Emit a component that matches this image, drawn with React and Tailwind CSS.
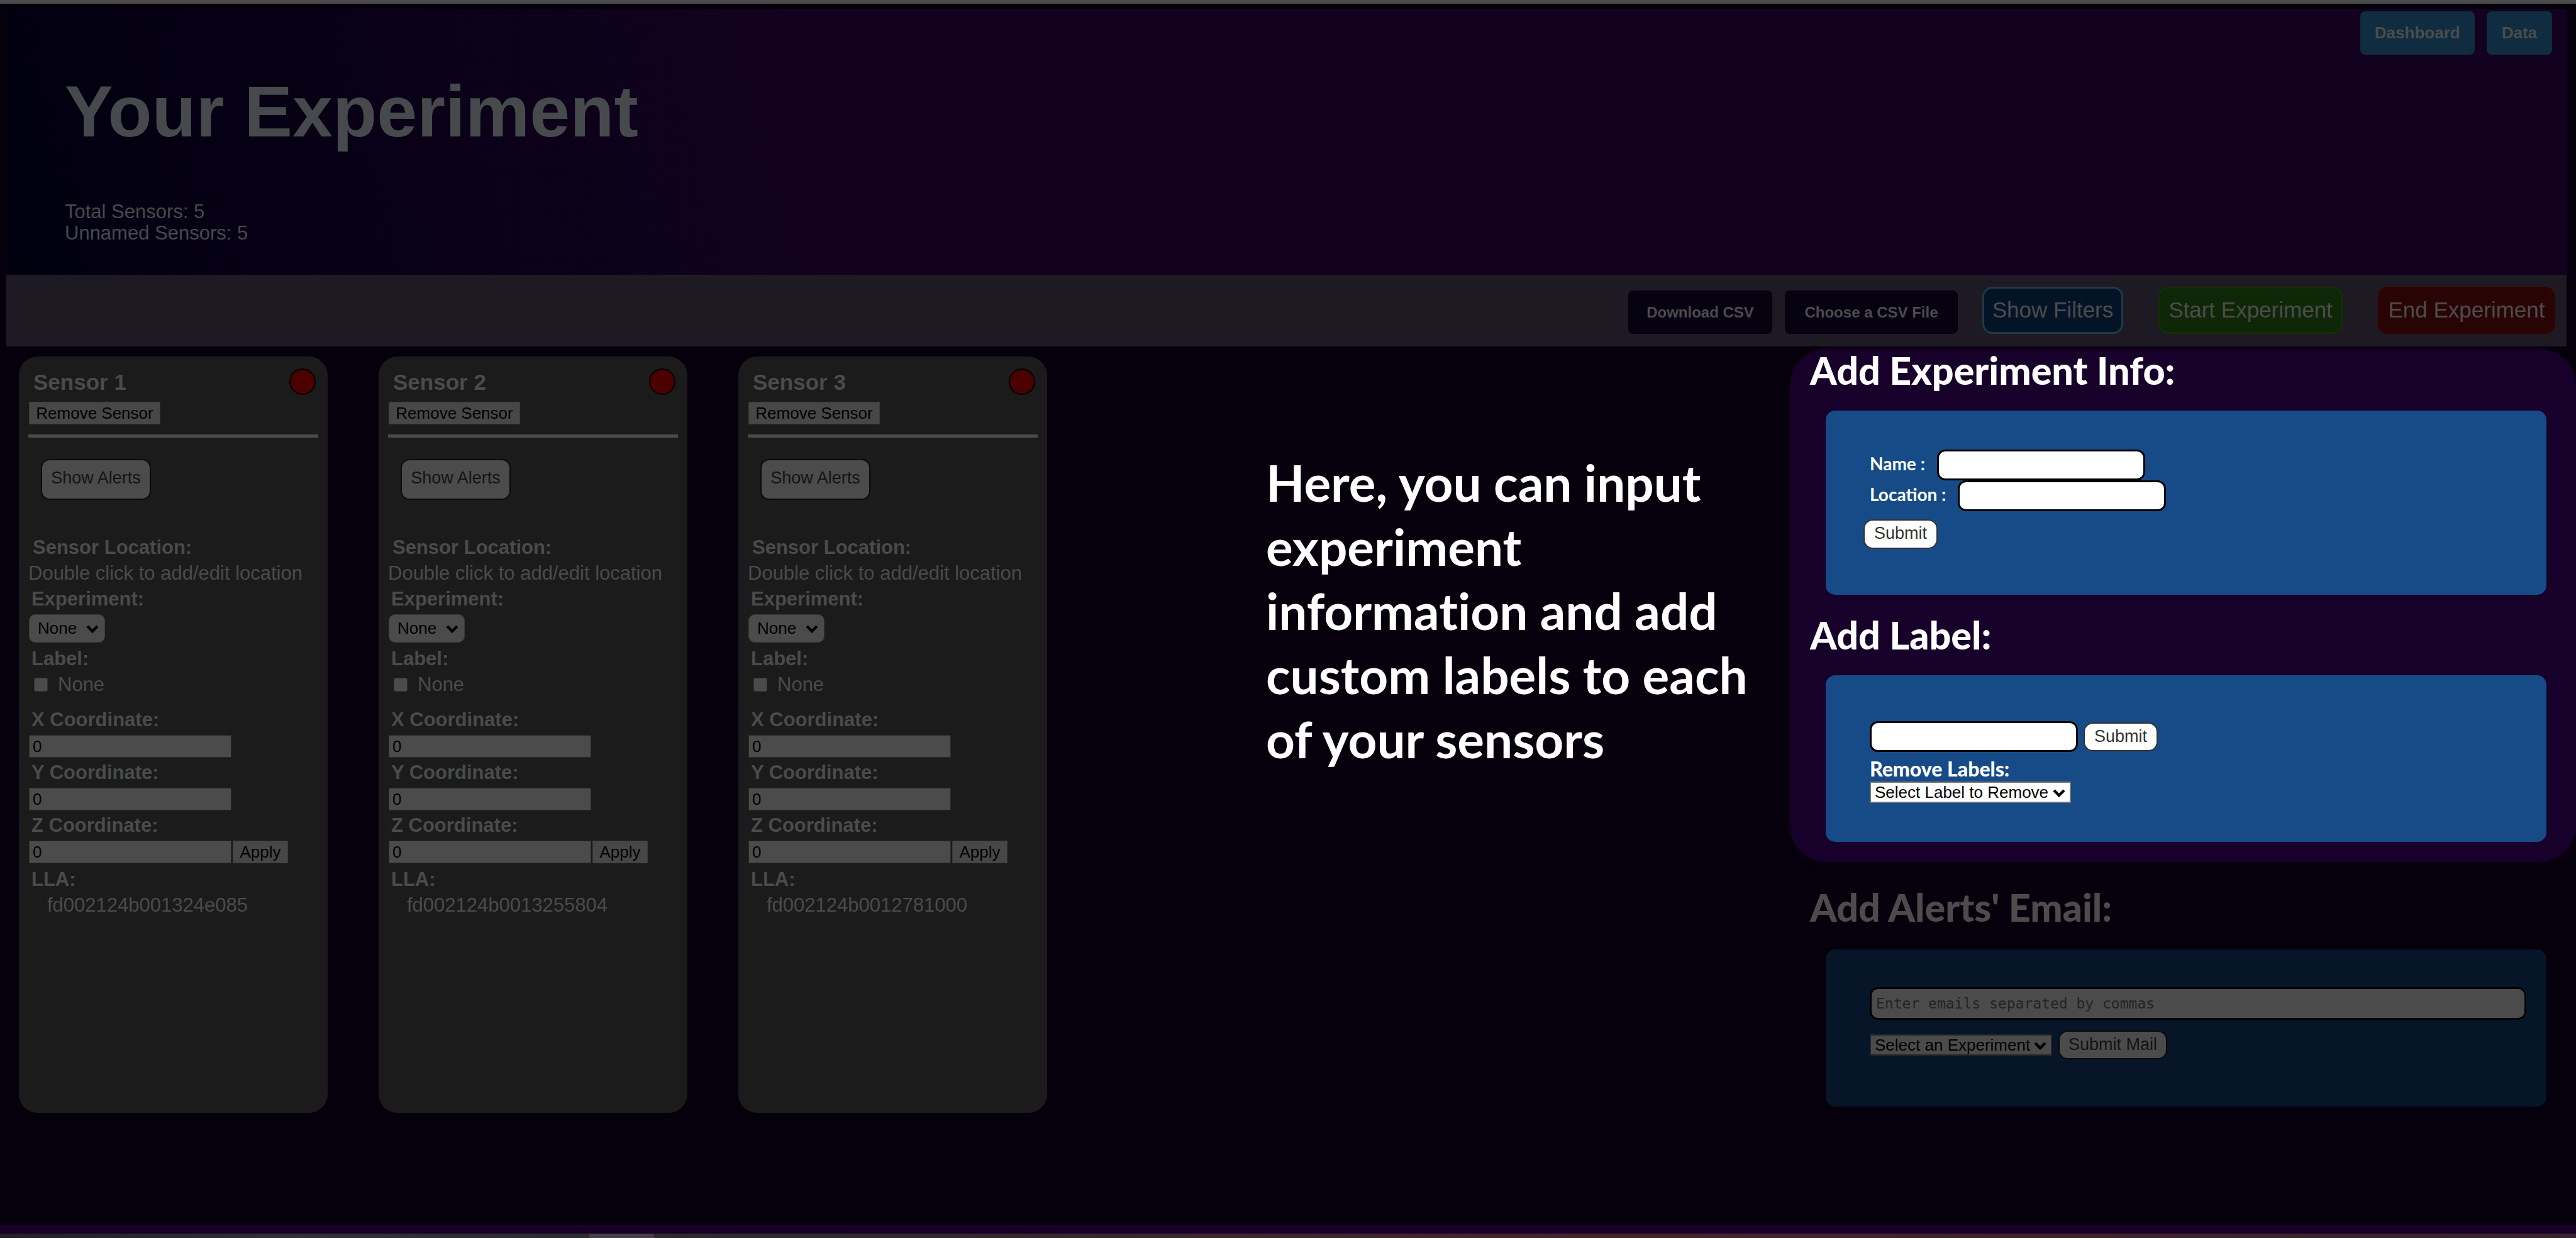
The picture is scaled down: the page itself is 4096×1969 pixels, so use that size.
import React from "react";

const sensors = [
  { id: 1, name: "Sensor 1", lla: "fd002124b001324e085" },
  { id: 2, name: "Sensor 2", lla: "fd002124b0013255804" },
  { id: 3, name: "Sensor 3", lla: "fd002124b0012781000" },
];

function Chevron({ className }) {
  return (
    <svg viewBox="0 0 20 14" className={className} aria-hidden="true">
      <path d="M2 3l8 8 8-8" fill="none" stroke="currentColor" strokeWidth="4.4" />
    </svg>
  );
}

function Coordinate({ id, label, children }) {
  return (
    <>
      <label htmlFor={id} className="block pl-1 text-[31px] leading-[41px] font-bold">
        {label}
      </label>
      <div className="mt-1 mb-[3px] flex gap-[2px]">
        <input
          id={id}
          defaultValue="0"
          className="h-9 w-[322px] border border-[#2a2a2a] bg-[#4b4b4b] pl-[5px] text-[26px] text-black"
        />
        {children}
      </div>
    </>
  );
}

function SensorCard({ sensor }) {
  const key = `s${sensor.id}`;
  return (
    <article className="min-h-[1203px] w-[491px] shrink-0 rounded-[30px] bg-[#1b1b1b] px-4 pt-[19px] text-[#494b4c]">
      <div className="flex items-end justify-between">
        <h2 className="pl-[7px] text-[35px] leading-[40px] font-bold">{sensor.name}</h2>
        <span className="mr-[3px] size-[42px] rounded-full border-2 border-black bg-[#4c0000]" />
      </div>
      <button className="mt-[11px] block h-9 w-[209px] border border-[#3a3a3a] bg-[#474747] text-[26px] leading-[32px] text-black">
        Remove Sensor
      </button>
      <hr className="-mx-px mt-4 h-[5px] border-0 bg-[#4b4b4b]" />
      <button className="mt-[34px] ml-[19px] block h-[65px] w-[175px] rounded-[14px] border-2 border-[#0b0b0b] bg-[#4b4b4b] pb-1 text-[27px] text-[#141414]">
        Show Alerts
      </button>
      <h3 className="mt-[55px] pl-[6px] text-[31px] leading-[41px] font-bold">Sensor Location:</h3>
      <p className="-mx-px text-[31px] leading-[41px] whitespace-nowrap">Double click to add/edit location</p>
      <label htmlFor={`${key}-exp`} className="block pl-1 text-[31px] leading-[41px] font-bold">
        Experiment:
      </label>
      <div className="relative mt-1 w-[121px]">
        <select
          id={`${key}-exp`}
          className="block h-[45px] w-full appearance-none rounded-[10px] border border-[#3a3a3a] bg-[#4b4b4b] pl-[13px] text-[26px] text-black"
        >
          <option>None</option>
        </select>
        <Chevron className="pointer-events-none absolute top-4 right-[10px] h-[14px] w-5 text-black" />
      </div>
      <h3 className="mt-[5px] pl-1 text-[31px] leading-[41px] font-bold">Label:</h3>
      <label className="flex items-center gap-4 pl-2 text-[31px] leading-[41px]">
        <input
          type="checkbox"
          className="size-[22px] appearance-none rounded-[3px] border border-[#333333] bg-[#4b4b4b]"
        />
        None
      </label>
      <div className="mt-[15px]">
        <Coordinate id={`${key}-x`} label="X Coordinate:" />
        <Coordinate id={`${key}-y`} label="Y Coordinate:" />
        <Coordinate id={`${key}-z`} label="Z Coordinate:">
          <button className="h-9 w-[88px] border border-[#3a3a3a] bg-[#474747] text-[26px] leading-[32px] text-black">
            Apply
          </button>
        </Coordinate>
      </div>
      <h3 className="mt-[5px] pl-1 text-[31px] leading-[41px] font-bold">LLA:</h3>
      <p className="pl-[29px] text-[31px] leading-[41px]">{sensor.lla}</p>
    </article>
  );
}

function FormSelect({ label, option, className, selectClass }) {
  return (
    <div className={`relative ${className}`}>
      <select
        aria-label={label}
        className={`block h-[34px] w-full appearance-none border-2 pl-[6px] text-[26px] leading-[28px] text-black ${selectClass}`}
      >
        <option>{option}</option>
      </select>
      <Chevron className="pointer-events-none absolute top-[11px] right-[9px] h-[14px] w-5 text-black" />
    </div>
  );
}

const field = "h-[49px] w-[331px] rounded-[13px] border-[3px] border-black bg-white px-2 text-[26px] text-black";
const heading = "ml-8 font-[Lato,sans-serif] text-[61px] leading-[64px] font-black";
const pill = "rounded-[15px] border-2 pb-[3px] text-[27px] leading-[40px]";

export default function App() {
  return (
    <div className="flex min-h-screen flex-col bg-[#06000c] font-['Liberation_Sans',Arial,sans-serif]">
      <div className="h-[6px] bg-[#4b4b4b]" />

      <header className="mt-2 mr-[15px] ml-[10px] flex items-start justify-between bg-linear-[76deg] from-[#00000f] from-0% via-[#13021f] via-33% to-[#13021f] text-[#474a4c]">
        <div className="pt-[97px] pb-[49px] pl-[93px]">
          <h1 className="text-[115px] leading-[132px] font-bold">Your Experiment</h1>
          <p className="mt-[77px] text-[31px] leading-[34px]">Total Sensors: 5</p>
          <p className="text-[31px] leading-[34px]">Unnamed Sensors: 5</p>
        </div>
        <nav className="flex gap-[19px] pt-1 pr-[23px] text-[26px] font-bold text-[#4c4c4c]">
          <a href="#dashboard" className="flex h-[69px] items-center rounded-[8px] bg-[#0f2c40] px-[23px]">
            Dashboard
          </a>
          <a href="#data" className="flex h-[69px] items-center rounded-[8px] bg-[#0f2c40] px-[24px]">
            Data
          </a>
        </nav>
      </header>

      <div className="mr-[15px] ml-[10px] flex items-end justify-end bg-[#1e1a23] pt-[19px] pr-[18px] pb-5 text-[#4c4c4c]">
        <button className="h-[69px] w-[229px] rounded-[8px] bg-[#070210] text-[24px] font-bold">Download CSV</button>
        <button className="ml-5 h-[69px] w-[275px] rounded-[8px] bg-[#070210] text-[24px] font-bold">
          Choose a CSV File
        </button>
        <button className="ml-[39px] h-[75px] w-[224px] rounded-[16px] border-[3px] border-[#1f3a48] bg-[#041427] text-[35px]">
          Show Filters
        </button>
        <button className="ml-14 h-[75px] w-[293px] rounded-[16px] border-[3px] border-[#122f04] bg-[#0e2707] text-[35px]">
          Start Experiment
        </button>
        <button className="ml-14 h-[75px] w-[282px] rounded-[16px] border-[3px] border-[#350000] bg-[#290404] text-[35px]">
          End Experiment
        </button>
      </div>

      <main className="flex flex-1 items-start">
        <section className="mt-4 ml-[30px] flex gap-[81px]">
          {sensors.map((s) => (
            <SensorCard key={s.id} sensor={s} />
          ))}
        </section>

        <p className="mt-[165px] ml-[348px] flex-1 pr-[20px] font-[Lato,sans-serif] text-[80px] leading-[102px] font-bold text-white [font-variant-ligatures:none]">
          Here, you can input experiment information and add custom labels to each of your sensors
        </p>

        <aside className="mt-1 w-[1250px] shrink-0">
          <div className="rounded-[58px] bg-[#17002a] pt-[2px] pb-8 text-white">
            <h2 className={heading}>Add Experiment Info:</h2>
            <form className="mt-8 mr-[47px] ml-[57px] rounded-[15px] bg-[#174b87] pt-[62px] pb-[73px] pl-[70px]">
              <div className="flex items-start gap-[19px]">
                <label htmlFor="exp-name" className="font-[Lato,sans-serif] text-[28px] leading-[44px] font-bold">
                  Name :
                </label>
                <input id="exp-name" className={field} />
              </div>
              <div className="flex items-start gap-[19px]">
                <label htmlFor="exp-loc" className="font-[Lato,sans-serif] text-[28px] leading-[44px] font-bold">
                  Location :
                </label>
                <input id="exp-loc" className={field} />
              </div>
              <button type="button" className={`mt-[13px] -ml-[10px] block h-[47px] w-[118px] border-[#333333] bg-white text-[#333333] ${pill}`}>
                Submit
              </button>
            </form>

            <h2 className={`mt-8 ${heading}`}>Add Label:</h2>
            <form className="mt-8 mr-[47px] ml-[57px] rounded-[15px] bg-[#174b87] pt-[73px] pb-[62px] pl-[70px]">
              <div className="flex items-center gap-[9px]">
                <input aria-label="New label" className={field} />
                <button type="button" className={`h-[46px] w-[118px] border-[#333333] bg-white text-[#333333] ${pill}`}>
                  Submit
                </button>
              </div>
              <h3 className="mt-[9px] font-[Lato,sans-serif] text-[32px] leading-[36px] font-black">Remove Labels:</h3>
              <FormSelect
                label="Remove Labels"
                option="Select Label to Remove"
                className="mt-[2px] w-[320px]"
                selectClass="border-[#767676] bg-white"
              />
            </form>
          </div>

          <p className="mb-3 ml-[25px] font-[Lato,sans-serif] text-[31px] leading-[28px] text-black">=</p>

          <h2 className={`text-[#4c4c4c] ${heading}`}>Add Alerts' Email:</h2>
          <form className="mt-[35px] mr-[47px] ml-[57px] rounded-[15px] bg-[#061527] pt-[60px] pr-8 pb-[75px] pl-[70px]">
            <input
              aria-label="Emails"
              placeholder="Enter emails separated by commas"
              className="block h-[52px] w-full rounded-[13px] border-[3px] border-black bg-[#4b4b4b] px-[7px] font-['DejaVu_Sans_Mono',monospace] text-[23px] text-black placeholder:text-[#242424]"
            />
            <div className="mt-[17px] flex items-center gap-[10px]">
              <FormSelect
                label="Experiment"
                option="Select an Experiment"
                className="w-[290px]"
                selectClass="border-[#242424] bg-[#4b4b4b]"
              />
              <button type="button" className={`h-[46px] w-[173px] border-[#0b0b0b] bg-[#4b4b4b] text-[#141414] ${pill}`}>
                Submit Mail
              </button>
            </div>
          </form>
        </aside>
      </main>

      <footer>
        <div className="h-[14px] bg-[#17002a]" />
        <div className="flex h-[7px]">
          <div className="w-[937px] bg-linear-to-r from-[#202224] via-[#2e3334] to-[#2a2e2e]" />
          <div className="w-[103px] bg-[#454042]" />
          <div className="flex-1 bg-linear-to-r from-[#2c2c2b] via-[#46242a] to-[#38242a]" />
        </div>
      </footer>
    </div>
  );
}
